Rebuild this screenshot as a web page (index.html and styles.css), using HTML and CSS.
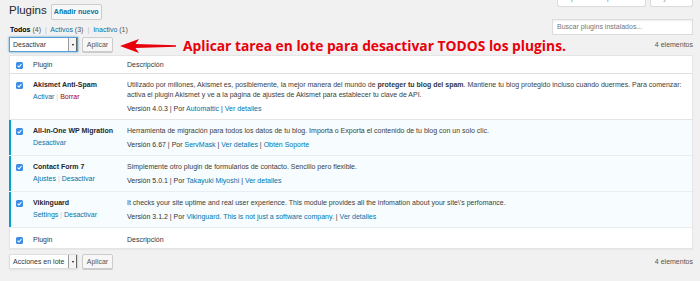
FILE: index.html
```html
<!DOCTYPE html>
<html lang="es">
<head>
<meta charset="utf-8">
<title>Plugins</title>
<link rel="stylesheet" href="styles.css">
</head>
<body>
<div class="wrap">
  <div class="head">
    <div class="title-group">
      <h1 class="title">Plugins</h1>
      <span class="add-new">Añadir nuevo</span>
    </div>
    <div class="meta-tabs">
      <div class="tab tab-options"><span class="tab-label">Opciones de pantalla ▾</span></div>
      <div class="tab tab-help"><span class="tab-label">Ayuda ▾</span></div>
    </div>
  </div>

  <div class="filters">
    <div class="subsubsub">
      <span class="current">Todos</span> <span class="cnt">(4)</span>
      <span class="sep">|</span>
      <span class="link">Activos</span> <span class="cnt">(3)</span>
      <span class="sep">|</span>
      <span class="link">Inactivo</span> <span class="cnt">(1)</span>
    </div>
    <div class="search">Buscar plugins instalados...</div>
  </div>

  <div class="tablenav top-nav">
    <div class="select focused"><span class="select-val">Desactivar</span><span class="select-arr"><i class="tri"></i></span></div>
    <span class="btn">Aplicar</span>
    <svg class="arrow" width="56" height="14" viewBox="0 0 56 14"><polygon points="0,7 19,0 15.5,5 56,6.2 56,7.8 15.5,9 19,14" fill="#e8000b"/></svg>
    <span class="note">Aplicar tarea en lote para desactivar TODOS los plugins.</span>
    <span class="items">4 elementos</span>
  </div>

  <div class="table">
    <div class="row thead">
      <div class="cb"><svg class="check" width="7" height="7" viewBox="0 0 7 7"><rect width="7" height="7" rx="1.5" fill="#3b8de6"/><path d="M1.6 3.6 L3 5 L5.5 2" stroke="#fff" stroke-width="1.1" fill="none"/></svg></div>
      <div class="col-name">Plugin</div>
      <div class="col-desc">Descripción</div>
    </div>

    <div class="row plugin">
      <div class="cb"><svg class="check" width="7" height="7" viewBox="0 0 7 7"><rect width="7" height="7" rx="1.5" fill="#3b8de6"/><path d="M1.6 3.6 L3 5 L5.5 2" stroke="#fff" stroke-width="1.1" fill="none"/></svg></div>
      <div class="col-name">
        <div class="pname">Akismet Anti-Spam</div>
        <div class="actions"><span class="link">Activar</span> <span class="asep">|</span> <span class="del">Borrar</span></div>
      </div>
      <div class="col-desc">
        <div class="desc">Utilizado por millones, Akismet es, posiblemente, la mejor manera del mundo de <b>proteger tu blog del spam</b>. Mantiene tu blog protegido incluso cuando duermes. Para comenzar:<br>activa el plugin Akismet y ve a la página de ajustes de Akismet para establecer tu clave de API.</div>
        <div class="ver">Versión 4.0.3 | Por <span class="link">Automattic</span> | <span class="link">Ver detalles</span></div>
      </div>
    </div>

    <div class="row plugin active">
      <div class="cb"><svg class="check" width="7" height="7" viewBox="0 0 7 7"><rect width="7" height="7" rx="1.5" fill="#3b8de6"/><path d="M1.6 3.6 L3 5 L5.5 2" stroke="#fff" stroke-width="1.1" fill="none"/></svg></div>
      <div class="col-name">
        <div class="pname">All-in-One WP Migration</div>
        <div class="actions"><span class="link">Desactivar</span></div>
      </div>
      <div class="col-desc">
        <div class="desc">Herramienta de migración para todos los datos de tu blog. Importa o Exporta el contenido de tu blog con un solo clic.</div>
        <div class="ver">Versión 6.67 | Por <span class="link">ServMask</span> | <span class="link">Ver detalles</span> | <span class="link">Obtén Soporte</span></div>
      </div>
    </div>

    <div class="row plugin active">
      <div class="cb"><svg class="check" width="7" height="7" viewBox="0 0 7 7"><rect width="7" height="7" rx="1.5" fill="#3b8de6"/><path d="M1.6 3.6 L3 5 L5.5 2" stroke="#fff" stroke-width="1.1" fill="none"/></svg></div>
      <div class="col-name">
        <div class="pname">Contact Form 7</div>
        <div class="actions"><span class="link">Ajustes</span> <span class="asep">|</span> <span class="link">Desactivar</span></div>
      </div>
      <div class="col-desc">
        <div class="desc">Simplemente otro plugin de formularios de contacto. Sencillo pero flexible.</div>
        <div class="ver">Versión 5.0.1 | Por <span class="link">Takayuki Miyoshi</span> | <span class="link">Ver detalles</span></div>
      </div>
    </div>

    <div class="row plugin active">
      <div class="cb"><svg class="check" width="7" height="7" viewBox="0 0 7 7"><rect width="7" height="7" rx="1.5" fill="#3b8de6"/><path d="M1.6 3.6 L3 5 L5.5 2" stroke="#fff" stroke-width="1.1" fill="none"/></svg></div>
      <div class="col-name">
        <div class="pname">Vikinguard</div>
        <div class="actions"><span class="link">Settings</span> <span class="asep">|</span> <span class="link">Desactivar</span></div>
      </div>
      <div class="col-desc">
        <div class="desc">It checks your site uptime and real user experience. This module provides all the infomation about your site\'s perfomance.</div>
        <div class="ver">Versión 3.1.2 | Por <span class="link">Vikinguard. This is not just a software company.</span> | <span class="link">Ver detalles</span></div>
      </div>
    </div>

    <div class="row tfoot">
      <div class="cb"><svg class="check" width="7" height="7" viewBox="0 0 7 7"><rect width="7" height="7" rx="1.5" fill="#3b8de6"/><path d="M1.6 3.6 L3 5 L5.5 2" stroke="#fff" stroke-width="1.1" fill="none"/></svg></div>
      <div class="col-name">Plugin</div>
      <div class="col-desc">Descripción</div>
    </div>
  </div>

  <div class="tablenav bottom-nav">
    <div class="select"><span class="select-val">Acciones en lote</span><span class="select-arr"><i class="tri"></i></span></div>
    <span class="btn">Aplicar</span>
    <span class="items">4 elementos</span>
  </div>
</div>
</body>
</html>
```

FILE: styles.css
```css
html, body {
  margin: 0;
  padding: 0;
  background: #f1f1f1;
}
body {
  font-family: "Liberation Sans", Arial, sans-serif;
  font-size: 7px;
  color: #444;
  width: 700px;
  height: 281px;
  overflow: hidden;
}
.wrap {
  padding: 0 7px 0 9px;
}
.link { color: #0073aa; }

/* header */
.head {
  display: flex;
  justify-content: space-between;
  align-items: flex-start;
  height: 20px;
}
.title-group {
  display: flex;
  align-items: flex-start;
}
.title {
  margin: 2px 0 0;
  font-size: 11.5px;
  line-height: 16px;
  font-weight: 400;
  color: #23282d;
}
.add-new {
  margin: 4px 0 0 4px;
  box-sizing: border-box;
  width: 51px;
  height: 16px;
  line-height: 13px;
  text-align: center;
  border: 1px solid #ccc;
  border-radius: 2px;
  background: #f7f7f7;
  color: #0073aa;
  font-weight: 700;
}
.meta-tabs {
  display: flex;
  gap: 4px;
}
.tab {
  box-sizing: border-box;
  height: 7px;
  background: #fff;
  border: 1px solid #ddd;
  border-top: 0;
  border-radius: 0 0 3px 3px;
  box-shadow: 0 1px 1px -1px rgba(0,0,0,.1);
  display: flex;
  align-items: flex-end;
  justify-content: center;
  overflow: hidden;
  color: #72777c;
}
.tab-label {
  line-height: 10px;
  margin-bottom: 3px;
  white-space: nowrap;
}
.tab-options { width: 89px; }
.tab-help { width: 43px; }

/* filters */
.filters {
  display: flex;
  justify-content: space-between;
  align-items: flex-end;
  margin-top: -1px;
  height: 16px;
}
.subsubsub {
  margin-left: 1px;
  line-height: 10px;
  white-space: nowrap;
  color: #555;
}
.subsubsub .current {
  color: #000;
  font-weight: 700;
}
.subsubsub .sep {
  color: #bbb;
  margin: 0 2px;
}
.search {
  box-sizing: border-box;
  width: 141px;
  height: 16px;
  border: 1px solid #ddd;
  background: #fff;
  box-shadow: inset 0 1px 2px rgba(0,0,0,.07);
  padding-left: 4px;
  line-height: 14px;
  color: #72777c;
}

/* tablenav */
.tablenav {
  display: flex;
  align-items: center;
  height: 15px;
}
.top-nav { margin-top: 2px; }
.bottom-nav { margin-top: 5px; }
.select {
  box-sizing: border-box;
  width: 69px;
  height: 15px;
  border: 1px solid #ddd;
  background: #fff;
  display: flex;
  box-shadow: 0 1px 2px rgba(0,0,0,.07);
}
.select.focused {
  border-color: #5b9dd9;
  box-shadow: 0 0 2px rgba(30,140,190,.8);
}
.select-val {
  flex: 1;
  padding-left: 3px;
  line-height: 13px;
  color: #32373c;
  white-space: nowrap;
  overflow: hidden;
}
.select-arr {
  width: 7px;
  border-left: 1px solid #999;
  border-right: 1px solid #666;
  background: #f4f4f4;
  display: flex;
  align-items: center;
  justify-content: center;
}
.tri {
  width: 0;
  height: 0;
  border-left: 1.5px solid transparent;
  border-right: 1.5px solid transparent;
  border-top: 2px solid #111;
}
.btn {
  box-sizing: border-box;
  margin-left: 4px;
  width: 31px;
  height: 15px;
  line-height: 13px;
  text-align: center;
  border: 1px solid #ccc;
  border-radius: 2px;
  background: #f7f7f7;
  box-shadow: 0 1px 0 #ccc;
  color: #555;
}
.arrow {
  margin-left: 7px;
  margin-top: 3px;
  flex: none;
}
.note {
  margin-left: 7px;
  margin-top: 1px;
  font-family: "Open Sans", "Liberation Sans", sans-serif;
  font-weight: 700;
  font-size: 13.8px;
  line-height: 15px;
  color: #e8000b;
  white-space: nowrap;
}
.items {
  margin-left: auto;
  color: #555;
  white-space: nowrap;
}

/* table */
.table {
  margin-top: 3px;
  background: #fff;
  border: 1px solid #e5e5e5;
  box-shadow: 0 1px 1px rgba(0,0,0,.04);
}
.row {
  display: grid;
  grid-template-columns: 24px 94px 1fr;
  margin-left: -1px;
  line-height: 10px;
}
.cb {
  padding-left: 7px;
  height: 10px;
  display: flex;
  align-items: center;
}
.check { display: block; }
.thead {
  padding: 4px 0 3px;
  border-bottom: 1px solid #e1e1e1;
  color: #32373c;
}
.tfoot {
  padding: 7px 0 3px;
  color: #32373c;
}
.plugin {
  padding: 6px 0 5px;
  border-bottom: 1px solid #e5e5e5;
}
.plugin.active {
  background: #f7fcfe;
  box-shadow: inset 2px 0 0 #00a0d2;
  border-bottom-color: #e8eef1;
}
.pname {
  font-weight: 700;
  color: #23282d;
  white-space: nowrap;
}
.actions {
  margin-top: 1.5px;
  white-space: nowrap;
}
.asep { color: #ccc; }
.del { color: #a00; }
.col-desc { padding-right: 8px; }
.desc {
  white-space: nowrap;
  color: #3c3c3c;
}
.desc b { color: #32373c; }
.ver {
  margin-top: 4px;
  white-space: nowrap;
  color: #333;
}
```
